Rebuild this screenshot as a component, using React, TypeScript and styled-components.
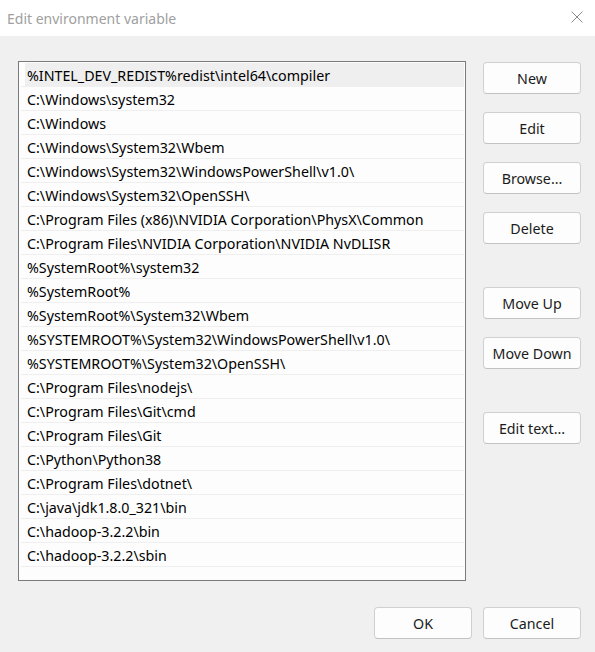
import React from "react";
import styled, { createGlobalStyle } from "styled-components";

const Global = createGlobalStyle`
  html, body { margin: 0; padding: 0; }
  body {
    width: 595px;
    height: 652px;
    overflow: hidden;
    background: #f0f0f0;
    font-family: "Noto Sans", "Open Sans", sans-serif;
  }
`;

const Window = styled.div`
  width: 595px;
  height: 652px;
  display: flex;
  flex-direction: column;
  background: #f0f0f0;
`;

const TitleBar = styled.div`
  height: 36px;
  flex: none;
  background: #ffffff;
  display: flex;
  align-items: center;
  justify-content: space-between;
  padding: 0 12px 0 7px;
`;

const Title = styled.div`
  font-size: 14px;
  color: #a0a0a0;
`;

const CloseButton = styled.div`
  width: 12px;
  height: 12px;
  display: flex;
  margin-top: -2px;
`;

const Body = styled.div`
  display: flex;
  padding: 25px 14px 0 18px;
  gap: 17px;
`;

const List = styled.div`
  width: 446px;
  height: 517px;
  border: 1px solid #7a7a7e;
  background: #fdfdfd;
  padding: 1px 1px 0 1px;
  box-sizing: content-box;
  overflow: hidden;
  display: flex;
  flex-direction: column;
`;

const Row = styled.div<{ $selected?: boolean }>`
  flex: none;
  box-sizing: border-box;
  height: 24px;
  border-bottom: 1px solid #efefef;
  margin-left: 1px;
  padding: 1px 0 0 6px;
  display: flex;
  align-items: center;
  font-size: 14.25px;
  color: #000;
  white-space: nowrap;
  background: ${(p) =>
    p.$selected
      ? "linear-gradient(to right, transparent 4px, #efefef 4px)"
      : "transparent"};
`;

const Buttons = styled.div`
  display: flex;
  flex-direction: column;
  padding-top: 1px;
  gap: 18px;
`;

const Button = styled.button<{ $gapBefore?: boolean }>`
  width: 98px;
  height: 32px;
  box-sizing: border-box;
  background: #fdfdfd;
  border: 1px solid #d0d0d0;
  border-bottom-color: #c2c2c2;
  border-radius: 4px;
  font-family: "Noto Sans", "Open Sans", sans-serif;
  font-size: 14.25px;
  color: #1b1b1b;
  padding: 1px 0 0 0;
  margin-top: ${(p) => (p.$gapBefore ? "25px" : "0")};
  cursor: default;
`;

const Footer = styled.div`
  display: flex;
  justify-content: flex-end;
  gap: 11px;
  padding: 26px 14px 0 0;
`;

const entries = [
  "%INTEL_DEV_REDIST%redist\\intel64\\compiler",
  "C:\\Windows\\system32",
  "C:\\Windows",
  "C:\\Windows\\System32\\Wbem",
  "C:\\Windows\\System32\\WindowsPowerShell\\v1.0\\",
  "C:\\Windows\\System32\\OpenSSH\\",
  "C:\\Program Files (x86)\\NVIDIA Corporation\\PhysX\\Common",
  "C:\\Program Files\\NVIDIA Corporation\\NVIDIA NvDLISR",
  "%SystemRoot%\\system32",
  "%SystemRoot%",
  "%SystemRoot%\\System32\\Wbem",
  "%SYSTEMROOT%\\System32\\WindowsPowerShell\\v1.0\\",
  "%SYSTEMROOT%\\System32\\OpenSSH\\",
  "C:\\Program Files\\nodejs\\",
  "C:\\Program Files\\Git\\cmd",
  "C:\\Program Files\\Git",
  "C:\\Python\\Python38",
  "C:\\Program Files\\dotnet\\",
  "C:\\java\\jdk1.8.0_321\\bin",
  "C:\\hadoop-3.2.2\\bin",
  "C:\\hadoop-3.2.2\\sbin",
  "",
];

export default function App() {
  return (
    <Window>
      <Global />
      <TitleBar>
        <Title>Edit environment variable</Title>
        <CloseButton>
          <svg width="12" height="12" viewBox="0 0 12 12">
            <path d="M0.5 0.5 L11.5 11.5 M11.5 0.5 L0.5 11.5" stroke="#8a8a8a" strokeWidth="1" fill="none" />
          </svg>
        </CloseButton>
      </TitleBar>
      <Body>
        <List>
          {entries.map((e, i) => (
            <Row key={i} $selected={i === 0}>
              {e}
            </Row>
          ))}
        </List>
        <Buttons>
          <Button>New</Button>
          <Button>Edit</Button>
          <Button>Browse...</Button>
          <Button>Delete</Button>
          <Button $gapBefore>Move Up</Button>
          <Button>Move Down</Button>
          <Button $gapBefore>Edit text...</Button>
        </Buttons>
      </Body>
      <Footer>
        <Button>OK</Button>
        <Button>Cancel</Button>
      </Footer>
    </Window>
  );
}
